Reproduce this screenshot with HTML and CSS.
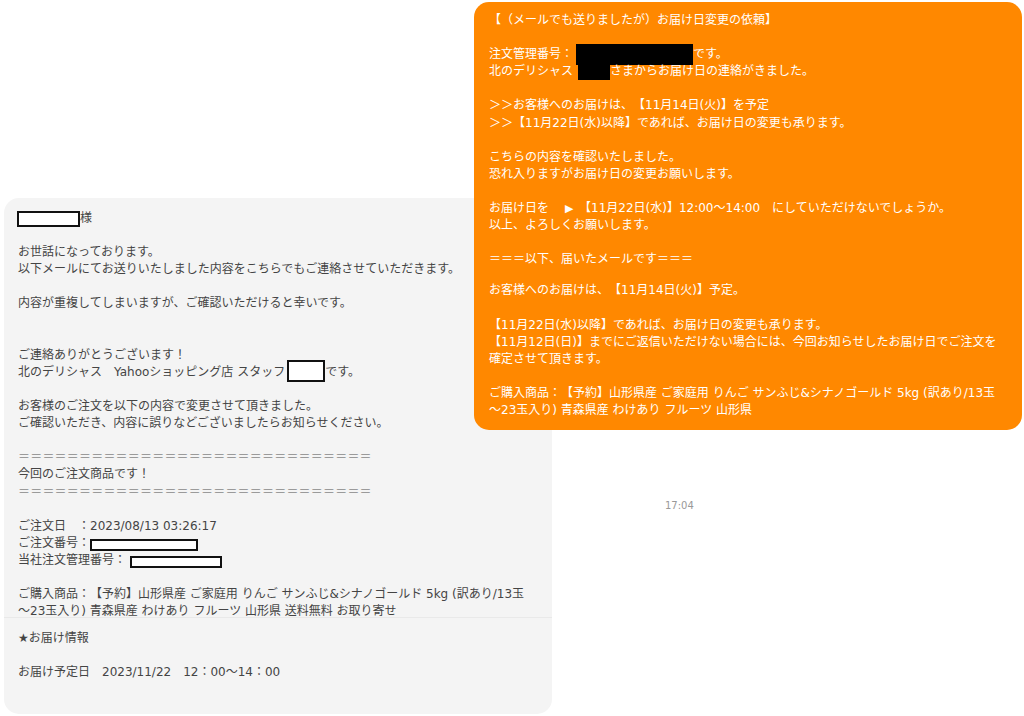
FILE: index.html
```html
<!DOCTYPE html>
<html lang="ja">
<head>
<meta charset="utf-8">
<title>チャット</title>
<link rel="stylesheet" href="styles.css">
</head>
<body>
<div class="page">
  <div class="bubble-in">
    <div class="sec">
      <p><span class="redact-w r-name"></span>様</p>
      <p>お世話になっております。<br>以下メールにてお送りいたしました内容をこちらでもご連絡させていただきます。</p>
      <p class="gap2">内容が重複してしまいますが、ご確認いただけると幸いです。</p>
      <p>ご連絡ありがとうございます！<br>北のデリシャス　Yahooショッピング店 スタッフ<span class="redact-w r-staff"></span>です。</p>
      <p>お客様のご注文を以下の内容で変更させて頂きました。<br>ご確認いただき、内容に誤りなどございましたらお知らせください。</p>
      <p><span class="eq">＝＝＝＝＝＝＝＝＝＝＝＝＝＝＝＝＝＝＝＝＝＝＝＝＝＝＝＝＝</span><br>今回のご注文商品です！<br><span class="eq">＝＝＝＝＝＝＝＝＝＝＝＝＝＝＝＝＝＝＝＝＝＝＝＝＝＝＝＝＝</span></p>
      <p>ご注文日　：2023/08/13 03:26:17<br>ご注文番号：<span class="redact-w r-order"></span><br>当社注文管理番号：<span class="redact-w r-mgmt"></span></p>
      <p class="last">ご購入商品：【予約】山形県産 ご家庭用 りんご サンふじ&amp;シナノゴールド 5kg (訳あり/13玉<br>～23玉入り) 青森県産 わけあり フルーツ 山形県 送料無料 お取り寄せ</p>
    </div>
    <div class="sec sec-low">
      <p>★お届け情報</p>
      <p class="last">お届け予定日　2023/11/22　12：00～14：00</p>
    </div>
  </div>

  <div class="bubble-out">
    <div class="osec">
      <p>【（メールでも送りましたが）お届け日変更の依頼】</p>
      <p>注文管理番号：<span class="redact-b r-onum"></span>です。<br>北のデリシャス<span class="redact-b r-oname"></span>さまからお届け日の連絡がきました。</p>
      <p>＞＞お客様へのお届けは、【11月14日(火)】を予定<br>＞＞【11月22日(水)以降】であれば、お届け日の変更も承ります。</p>
      <p>こちらの内容を確認いたしました。<br>恐れ入りますがお届け日の変更お願いします。</p>
      <p>お届け日を　<span class="tri">▶</span>【11月22日(水)】12:00～14:00　にしていただけないでしょうか。<br>以上、よろしくお願いします。</p>
      <p class="last">＝＝＝以下、届いたメールです＝＝＝</p>
    </div>
    <div class="osec osec-low">
      <p>お客様へのお届けは、【11月14日(火)】予定。</p>
      <p>【11月22日(水)以降】であれば、お届け日の変更も承ります。<br>【11月12日(日)】までにご返信いただけない場合には、今回お知らせしたお届け日でご注文を<br>確定させて頂きます。</p>
      <p class="last">ご購入商品：【予約】山形県産 ご家庭用 りんご サンふじ&amp;シナノゴールド 5kg (訳あり/13玉<br>～23玉入り) 青森県産 わけあり フルーツ 山形県</p>
    </div>
  </div>

  <div class="time">17:04</div>
</div>
</body>
</html>
```

FILE: styles.css
```css
html, body {
  margin: 0;
  padding: 0;
  background: #ffffff;
}

body {
  font-family: "DejaVu Sans", "Noto Sans CJK JP", sans-serif;
  font-size: 12px;
  line-height: 17.1px;
  width: 1024px;
  height: 716px;
  overflow: hidden;
  text-spacing-trim: space-all;
}

.page {
  position: relative;
  width: 1024px;
  height: 716px;
  padding-top: 198px;
  box-sizing: border-box;
}

p {
  margin: 0 0 17.1px 0;
  white-space: nowrap;
}

p.gap2 {
  margin-bottom: 34.2px;
}

p.last {
  margin-bottom: 0;
}

/* incoming (grey) bubble */
.bubble-in {
  margin-left: 4px;
  width: 548px;
  height: 516px;
  background: #f4f4f4;
  border-radius: 15px;
  color: #444444;
  overflow: hidden;
  display: flex;
  flex-direction: column;
}

.sec {
  padding: 12px 14px 0 14px;
}

.sec-low {
  margin-top: -3px;
  padding-top: 12px;
  border-top: 1px solid #e9e9e9;
}

.eq {
  color: #8a8a8a;
  letter-spacing: 0.2px;
}

.redact-w {
  display: inline-block;
  box-sizing: border-box;
  background: #ffffff;
  border: 2px solid #111111;
  vertical-align: top;
}

.r-name {
  width: 63px;
  height: 16px;
  margin-top: 1px;
  margin-left: -1px;
}

.r-staff {
  width: 38px;
  height: 22px;
  margin-top: -4px;
  margin-bottom: -1px;
  margin-left: 2px;
}

.r-order {
  width: 108px;
  height: 12px;
  margin-top: 4px;
}

.r-mgmt {
  width: 92px;
  height: 12px;
  margin-top: 4px;
  margin-left: 4px;
}

/* outgoing (orange) bubble, overlapping */
.bubble-out {
  position: absolute;
  top: 2px;
  left: 474px;
  width: 548px;
  height: 428px;
  background: #ff8800;
  border-radius: 15px;
  color: #ffffff;
  overflow: hidden;
}

.osec {
  padding: 10px 14px 0 15px;
}

.osec-low {
  padding-top: 14px;
}

.tri {
  display: inline-block;
  width: 14px;
  padding-left: 4px;
  font-size: 11px;
}

.redact-b {
  display: inline-block;
  background: #000000;
  vertical-align: top;
}

.r-onum {
  width: 117px;
  height: 21px;
  margin-top: -2px;
  margin-bottom: -2px;
  margin-left: 3px;
}

.r-oname {
  width: 32px;
  height: 17px;
  margin-left: 5px;
}

.time {
  position: absolute;
  top: 499px;
  left: 665px;
  font-size: 10px;
  line-height: 14px;
  color: #999999;
  font-family: "DejaVu Sans", "Noto Sans", sans-serif;
}
```
